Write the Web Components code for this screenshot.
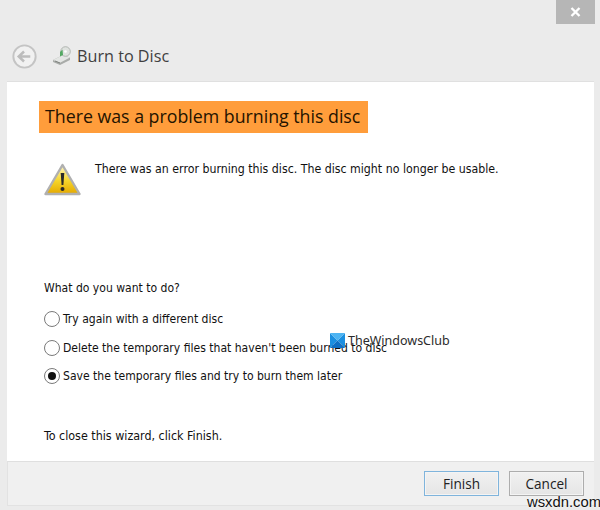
<!DOCTYPE html>
<html>
<head>
<meta charset="utf-8">
<title>Burn to Disc</title>
<style>
    html, body { margin: 0; padding: 0; }
    body { width: 600px; height: 510px; overflow: hidden; background: #ebebeb; font-family: "DejaVu Sans", sans-serif; }
</style>
</head>
<body>
<burn-wizard>
    <wizard-titlebar slot="titlebar" title-text="Burn to Disc"></wizard-titlebar>

    <wizard-heading slot="content">There was a problem burning this disc</wizard-heading>
    <wizard-message slot="content">There was an error burning this disc. The disc might no longer be usable.</wizard-message>
    <wizard-options slot="content" prompt="What do you want to do?">
        <wizard-radio>Try again with a different disc</wizard-radio>
        <wizard-radio>Delete the temporary files that haven't been burned to disc</wizard-radio>
        <wizard-radio checked>Save the temporary files and try to burn them later</wizard-radio>
    </wizard-options>
    <wizard-note slot="content">To close this wizard, click Finish.</wizard-note>

    <wizard-button slot="footer" focused>Finish</wizard-button>
    <wizard-button slot="footer">Cancel</wizard-button>
</burn-wizard>
<site-marks></site-marks>

<script>
class BurnWizard extends HTMLElement {
    constructor() {
        super();
        this.attachShadow({ mode: 'open' });
    }

    connectedCallback() {
        this.shadowRoot.innerHTML = `
            <style>
                :host {
                    display: flex;
                    flex-direction: column;
                    width: 600px;
                    height: 510px;
                    box-sizing: border-box;
                    padding: 0 6px 4px 7px;
                    background: #ebebeb;
                }
                .main {
                    height: 379px;
                    box-sizing: border-box;
                    margin-top: 1px;
                    padding: 19px 0 0 32px;
                    background: #fff;
                    box-shadow: 0 -1px 0 #e0e0e0;
                }
                .footer {
                    flex: 1;
                    display: flex;
                    justify-content: flex-end;
                    gap: 10px;
                    padding: 9px 10px 0 0;
                    background: #f0f0f0;
                    border-top: 1px solid #dfdfdf;
                    border-bottom: 1px solid #e2e2e2;
                    border-left: 1px solid #e2e2e2;
                    box-sizing: border-box;
                }
            </style>
            <slot name="titlebar"></slot>
            <div class="main"><slot name="content"></slot></div>
            <div class="footer"><slot name="footer"></slot></div>
        `;
    }
}

class WizardTitlebar extends HTMLElement {
    constructor() {
        super();
        this.attachShadow({ mode: 'open' });
    }

    connectedCallback() {
        this.shadowRoot.innerHTML = `
            <style>
                :host {
                    display: block;
                    position: relative;
                    height: 81px;
                }
                .close {
                    position: absolute;
                    top: 0;
                    right: -1px;
                    width: 39px;
                    height: 24px;
                    background: #b6b6b6;
                    display: flex;
                    align-items: center;
                    justify-content: center;
                }
                .row {
                    display: flex;
                    align-items: center;
                    height: 32px;
                    padding: 40px 0 0 5px;
                }
                .back { width: 25px; height: 25px; margin-right: 15px; }
                .disc { width: 20px; height: 20px; margin-right: 5px; }
                .title {
                    font: 16.2px "Open Sans", "Noto Sans", sans-serif;
                    color: #3f3f3f;
                }
            </style>
            <div class="close">
                <svg width="11" height="10" viewBox="0 0 11 10"><path d="M1.5 1 L9.5 9 M9.5 1 L1.5 9" stroke="#fff" stroke-width="2.4"/></svg>
            </div>
            <div class="row">
                <svg class="back" viewBox="0 0 26 26">
                    <circle cx="13" cy="13" r="11.6" fill="#f1f1f1" stroke="#c4c4c4" stroke-width="2"/>
                    <path d="M7 13 H19 M12.5 7.8 L7 13 L12.5 18.2" fill="none" stroke="#bcbcbc" stroke-width="2.6"/>
                </svg>
                <svg class="disc" viewBox="0 0 20 20">
                    <path d="M1 14 L11 9 L18 11.5 L18 14 L8 19 L1 16 Z" fill="#a9aca9"/>
                    <path d="M1 14 L11 9 L18 11.5 L8 16.8 Z" fill="#e4e6e4"/>
                    <path d="M3 15 L8 17" fill="none" stroke="#7f837f" stroke-width="1"/>
                    <circle cx="13.5" cy="5.5" r="4.8" fill="#dfe2df" stroke="#a5a9a5" stroke-width=".8"/>
                    <circle cx="13.5" cy="5.5" r="1.3" fill="#fff"/>
                    <path d="M8 10.5 L8 6 L10.5 3.5 L11 9 Z" fill="#54a863"/>
                </svg>
                <span class="title">${this.getAttribute('title-text')}</span>
            </div>
        `;
    }
}

class WizardHeading extends HTMLElement {
    constructor() {
        super();
        this.attachShadow({ mode: 'open' });
        this.shadowRoot.innerHTML = `
            <style>
                :host {
                    display: block;
                    width: 329px;
                    height: 32px;
                    box-sizing: border-box;
                    padding-left: 6px;
                    background: #ff9d3b;
                    font: 17.75px/30px "Open Sans", "Noto Sans", sans-serif;
                    color: #241300;
                    white-space: nowrap;
                }
            </style>
            <slot></slot>
        `;
    }
}

class WizardMessage extends HTMLElement {
    constructor() {
        super();
        this.attachShadow({ mode: 'open' });
        this.shadowRoot.innerHTML = `
            <style>
                :host {
                    display: flex;
                    gap: 14px;
                    margin: 30px 0 0 5px;
                    height: 118px;
                    font: 12.25px "DejaVu Sans Condensed", "DejaVu Sans", sans-serif;
                    color: #111;
                }
                svg { width: 37px; height: 34px; flex: none; }
                span { line-height: 13px; }
            </style>
            <svg viewBox="0 0 37 34">
                <defs>
                    <linearGradient id="warn" x1="0" y1="0" x2="0" y2="1">
                        <stop offset="0" stop-color="#fdf6c8"/>
                        <stop offset=".55" stop-color="#f6d52a"/>
                        <stop offset="1" stop-color="#e4a800"/>
                    </linearGradient>
                </defs>
                <path d="M18.5 2 L35.5 31 H1.5 Z" fill="url(#warn)" stroke="#b0b0b0" stroke-width="2.4" stroke-linejoin="round"/>
                <path d="M16.7 10 H20.3 L19.4 22 H17.6 Z" fill="#2a2a2a"/>
                <circle cx="18.5" cy="26" r="2" fill="#2a2a2a"/>
            </svg>
            <span><slot></slot></span>
        `;
    }
}

class WizardOptions extends HTMLElement {
    constructor() {
        super();
        this.attachShadow({ mode: 'open' });
    }

    connectedCallback() {
        this.shadowRoot.innerHTML = `
            <style>
                :host {
                    display: block;
                    margin: 0 0 0 5px;
                    font: 12.05px "DejaVu Sans Condensed", "DejaVu Sans", sans-serif;
                    color: #111;
                }
                .prompt { line-height: 14px; margin-bottom: 13px; }
                .list { display: flex; flex-direction: column; gap: 6.5px; }
            </style>
            <div class="prompt">${this.getAttribute('prompt')}</div>
            <div class="list"><slot></slot></div>
        `;
    }
}

class WizardRadio extends HTMLElement {
    constructor() {
        super();
        this.attachShadow({ mode: 'open' });
    }

    connectedCallback() {
        const dot = this.hasAttribute('checked') ? '<i></i>' : '';
        this.shadowRoot.innerHTML = `
            <style>
                :host {
                    display: flex;
                    align-items: center;
                    gap: 3px;
                    height: 22px;
                    white-space: nowrap;
                }
                .mark {
                    width: 14px;
                    height: 14px;
                    border: 1px solid #7a7a7a;
                    border-radius: 50%;
                    background: #fff;
                    display: flex;
                    align-items: center;
                    justify-content: center;
                    flex: none;
                }
                i {
                    width: 8px;
                    height: 8px;
                    border-radius: 50%;
                    background: #111;
                }
            </style>
            <span class="mark">${dot}</span>
            <span><slot></slot></span>
        `;
    }
}

class WizardNote extends HTMLElement {
    constructor() {
        super();
        this.attachShadow({ mode: 'open' });
        this.shadowRoot.innerHTML = `
            <style>
                :host {
                    display: block;
                    margin: 42px 0 0 5px;
                    font: 12.4px/14px "DejaVu Sans Condensed", "DejaVu Sans", sans-serif;
                    color: #111;
                }
            </style>
            <slot></slot>
        `;
    }
}

class WizardButton extends HTMLElement {
    constructor() {
        super();
        this.attachShadow({ mode: 'open' });
    }

    connectedCallback() {
        const border = this.hasAttribute('focused') ? '#7fb4dc' : '#adadad';
        this.shadowRoot.innerHTML = `
            <style>
                :host {
                    display: flex;
                    align-items: center;
                    justify-content: center;
                    width: 75px;
                    height: 25px;
                    box-sizing: border-box;
                    border: 1px solid ${border};
                    box-shadow: inset 0 0 0 1px #f4f4f4;
                    background: linear-gradient(#f1f1f1, #e5e5e5);
                    font: 13.6px "Open Sans", "Noto Sans", sans-serif;
                    color: #222;
                }
            </style>
            <slot></slot>
        `;
    }
}

class SiteMarks extends HTMLElement {
    constructor() {
        super();
        this.attachShadow({ mode: 'open' });
        this.shadowRoot.innerHTML = `
            <style>
                .club {
                    position: absolute;
                    left: 330px;
                    top: 332px;
                    display: flex;
                    align-items: center;
                    gap: 3px;
                    font: 12.5px "Noto Sans", sans-serif;
                    color: #2b2b2b;
                }
                .wsxdn {
                    position: absolute;
                    left: 527px;
                    top: 494px;
                    font: 14.8px/16px "Liberation Sans", sans-serif;
                    color: #111;
                    text-shadow: 0 0 2px #fff;
                }
            </style>
            <div class="club">
                <svg width="15" height="15" viewBox="0 0 15 15">
                    <path d="M0 0 L7.5 7.5 L0 15 Z" fill="#1b8fe0"/>
                    <path d="M15 0 L7.5 7.5 L15 15 Z" fill="#1b8fe0"/>
                    <path d="M0 0 H15 L7.5 7.5 Z" fill="#4db4f2"/>
                    <path d="M0 15 H15 L7.5 7.5 Z" fill="#0f6fc4"/>
                </svg>
                <span>TheWindowsClub</span>
            </div>
            <div class="wsxdn">wsxdn.com</div>
        `;
    }
}

customElements.define('burn-wizard', BurnWizard);
customElements.define('wizard-titlebar', WizardTitlebar);
customElements.define('wizard-heading', WizardHeading);
customElements.define('wizard-message', WizardMessage);
customElements.define('wizard-options', WizardOptions);
customElements.define('wizard-radio', WizardRadio);
customElements.define('wizard-note', WizardNote);
customElements.define('wizard-button', WizardButton);
customElements.define('site-marks', SiteMarks);
</script>
</body>
</html>
